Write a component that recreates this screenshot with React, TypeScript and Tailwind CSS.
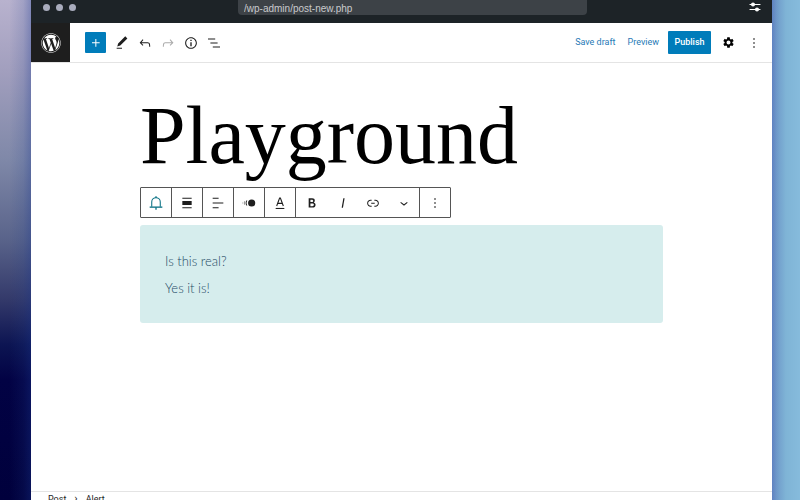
import type { ReactNode } from 'react';
import { FaWordpress } from 'react-icons/fa';
import { MdSettings } from 'react-icons/md';

const PATHS = {
  plus: 'M11 12.5V17.5H12.5V12.5H17.5V11H12.5V6H11V11H6V12.5H11Z',
  edit: 'M20.1 5.1L16.9 2 6.2 12.7l-1.3 4.4 4.5-1.3L20.1 5.1zM4 20.8h8v-1.5H4v1.5z',
  undo: 'M18.3 11.7c-.6-.6-1.4-.9-2.3-.9H6.7l2.9-3.3-1.1-1-4.5 5L8.5 16l1-1-2.7-2.7H16c.5 0 .9.2 1.3.5 1 1 1 3.4 1 4.5v.3h1.5v-.2c0-1.5 0-4.3-1.5-5.7z',
  redo: 'M15.6 6.5l-1.1 1 2.9 3.3H8c-.9 0-1.7.3-2.3.9-1.4 1.5-1.4 4.2-1.4 5.6v.2h1.5v-.3c0-1.1 0-3.5 1-4.5.3-.3.7-.5 1.3-.5h9.2L14.5 15l1.1 1.1 4.6-4.6-4.6-5z',
  info: 'M12 3.2c-4.8 0-8.8 3.9-8.8 8.8 0 4.8 3.9 8.8 8.8 8.8 4.8 0 8.8-3.9 8.8-8.8 0-4.8-4-8.8-8.8-8.8zm0 16c-4 0-7.2-3.3-7.2-7.2C4.8 8 8 4.8 12 4.8s7.2 3.3 7.2 7.2c0 4-3.2 7.2-7.2 7.2zM11 17h2v-6h-2v6zm0-8h2V7h-2v2z',
  listView: 'M13.8 5.2H3v1.5h10.8V5.2zm-3.6 12v1.5H21v-1.5H10.2zm7.2-6H6.6v1.5h10.8v-1.5z',
  more: 'M13 19h-2v-2h2v2zm0-6h-2v-2h2v2zm0-6h-2V5h2v2z',
  alignBlock: 'M5 15h14V9H5v6zm0 4.8h14v-1.5H5v1.5zM5 4.2v1.5h14V4.2H5z',
  alignText: 'M4 19.8h8.9v-1.5H4v1.5zm8.9-15.6H4v1.5h8.9V4.2zm-8.9 7v1.5h16v-1.5H4z',
  bold: 'M14.7 11.3c1-.6 1.5-1.6 1.5-3 0-2.3-1.3-3.4-4-3.4H7v14h5.8c1.4 0 2.5-.3 3.3-1 .8-.7 1.2-1.7 1.2-2.9.1-1.9-.8-3.1-2.6-3.7zm-5.1-4h2.3c.6 0 1.1.1 1.4.4.3.3.5.7.5 1.2s-.2 1-.5 1.2c-.3.3-.8.4-1.4.4H9.6V7.3zm4.6 9c-.4.3-1 .4-1.7.4H9.6v-3.9h2.9c.7 0 1.3.2 1.7.5.4.3.6.8.6 1.5s-.2 1.2-.6 1.5z',
  italic: 'M12.5 5L10 19h1.9l2.5-14z',
  link: 'M15.6 7.2H14v1.5h1.6c2 0 3.7 1.7 3.7 3.7s-1.7 3.7-3.7 3.7H14v1.5h1.6c2.8 0 5.2-2.3 5.2-5.2 0-2.9-2.3-5.2-5.2-5.2zM4.7 12.4c0-2 1.7-3.7 3.7-3.7H10V7.2H8.4c-2.9 0-5.2 2.3-5.2 5.2 0 2.9 2.3 5.2 5.2 5.2H10v-1.5H8.4c-2 0-3.7-1.7-3.7-3.7zm4.6.9h5.3v-1.5H9.3v1.5z',
  chevron: 'M17.5 11.6L12 16l-5.5-4.4.9-1.2L12 14l4.5-3.6 1 1.2z',
};

function Icon({ name }: { name: keyof typeof PATHS }) {
  return (
    <svg width="16" height="16" viewBox="0 0 24 24" fill="currentColor" aria-hidden="true">
      <path d={PATHS[name]} />
    </svg>
  );
}

function BellIcon() {
  return (
    <svg width="16" height="16" viewBox="0 0 24 24" fill="none" stroke="currentColor" strokeWidth="1.6" aria-hidden="true">
      <path d="M5.6 17.5V10.5a6.4 6.4 0 0 1 12.8 0v7" />
      <path d="M2.5 18.2h19" strokeWidth="2" />
      <path d="M12 2v2.5M12 18.5v3.8" strokeWidth="2" />
    </svg>
  );
}

function MotionIcon() {
  return (
    <svg width="16" height="16" viewBox="0 0 24 24" fill="none" stroke="currentColor" strokeWidth="1.4" aria-hidden="true">
      <circle cx="16" cy="12" r="5.4" fill="currentColor" stroke="none" />
      <path d="M8.6 8.2a8 8 0 0 0 0 7.6" />
      <path d="M5.6 9.2a8 8 0 0 0 0 5.6" opacity=".5" />
      <path d="M2.8 10.4a6 6 0 0 0 0 3.2" opacity=".25" />
    </svg>
  );
}

function TextColorIcon() {
  return (
    <svg width="16" height="16" viewBox="0 0 24 24" fill="none" stroke="currentColor" strokeWidth="1.6" aria-hidden="true">
      <path d="M7 16.5 11.4 4.5h1.2L17 16.5M8.6 12.6h6.8" />
      <path d="M5.5 20.2h13" />
    </svg>
  );
}

function SlidersIcon() {
  return (
    <svg width="12" height="12" viewBox="0 0 24 24" fill="#fff" stroke="#fff" strokeWidth="2.4" strokeLinecap="round" aria-hidden="true">
      <path d="M2 7h20M2 17h20" />
      <circle cx="8" cy="7" r="2.8" />
      <circle cx="16" cy="17" r="2.8" />
    </svg>
  );
}

interface IconButtonProps {
  label: string;
  className: string;
  children: ReactNode;
}

function IconButton({ label, className, children }: IconButtonProps) {
  return (
    <button type="button" aria-label={label} className={`flex shrink-0 items-center justify-center ${className}`}>
      {children}
    </button>
  );
}

function BrowserBar() {
  return (
    <div className="flex h-[23px] shrink-0 items-start justify-between bg-[#1d2327]">
      <div className="ml-3 flex h-[14px] w-[33px] items-center gap-[6px]">
        <span className="size-[7px] shrink-0 rounded-full bg-[#a9acbd]" />
        <span className="size-[7px] shrink-0 rounded-full bg-[#a9acbd]" />
        <span className="size-[7px] shrink-0 rounded-full bg-[#a9acbd]" />
      </div>
      <input
        type="text"
        aria-label="Address"
        defaultValue="/wp-admin/post-new.php"
        className="h-[15px] w-[349px] max-w-[50vw] rounded-b bg-[#3d4247] px-[6px] pt-px font-['Liberation_Sans',sans-serif] text-[10px] text-[#c9cacd] outline-none"
      />
      <div className="mr-[11px] flex h-[14px] items-center">
        <IconButton label="Browser settings" className="size-3">
          <SlidersIcon />
        </IconButton>
      </div>
    </div>
  );
}

function EditorHeader() {
  return (
    <header className="flex h-[40px] shrink-0 items-center border-b border-[#e4e4e4]">
      <a href="#posts" aria-label="View posts" className="flex h-[39px] w-[39px] items-center justify-center bg-[#1e1e1e] text-white">
        <FaWordpress size={20} />
      </a>
      <IconButton label="Add block" className="ml-[15px] mr-1 size-[21px] rounded-[1px] bg-[#007cba] text-white">
        <Icon name="plus" />
      </IconButton>
      <IconButton label="Tools" className="size-[23px]"><Icon name="edit" /></IconButton>
      <IconButton label="Undo" className="size-[23px]"><Icon name="undo" /></IconButton>
      <IconButton label="Redo" className="size-[23px] text-[#aaaaaa]"><Icon name="redo" /></IconButton>
      <IconButton label="Details" className="size-[23px]"><Icon name="info" /></IconButton>
      <IconButton label="List view" className="size-[23px]"><Icon name="listView" /></IconButton>
      <div className="ml-auto flex items-center pr-[6px] font-['Roboto',sans-serif] text-[9px]">
        <button type="button" className="mr-3 pt-px text-[#1f7ab6]">Save draft</button>
        <button type="button" className="mr-[9px] pt-px text-[#1f7ab6]">Preview</button>
        <button type="button" className="mr-[5px] h-[23px] w-[43px] rounded-[1px] bg-[#007cba] pt-px font-medium text-white">Publish</button>
        <IconButton label="Settings" className="size-[25px] text-black"><MdSettings size={13} /></IconButton>
        <IconButton label="Options" className="size-[25px]"><Icon name="more" /></IconButton>
      </div>
    </header>
  );
}

function BlockToolbar() {
  return (
    <div role="toolbar" aria-label="Block tools" className="flex h-[31px] w-fit divide-x divide-[#555555] rounded-[1px] border border-[#555555]">
      <IconButton label="Alert" className="w-[31px] text-[#0b7285]"><BellIcon /></IconButton>
      <IconButton label="Align" className="w-[31px]"><Icon name="alignBlock" /></IconButton>
      <IconButton label="Align text" className="w-[31px]"><Icon name="alignText" /></IconButton>
      <IconButton label="Animation" className="w-[31px]"><MotionIcon /></IconButton>
      <IconButton label="Text color" className="w-[31px]"><TextColorIcon /></IconButton>
      <div className="flex">
        <IconButton label="Bold" className="w-[31px]"><Icon name="bold" /></IconButton>
        <IconButton label="Italic" className="w-[31px]"><Icon name="italic" /></IconButton>
        <IconButton label="Link" className="w-[30px]"><Icon name="link" /></IconButton>
        <IconButton label="More" className="w-[31px]"><Icon name="chevron" /></IconButton>
      </div>
      <IconButton label="Options" className="w-[30px]"><Icon name="more" /></IconButton>
    </div>
  );
}

export default function App() {
  return (
    <div className="flex h-screen overflow-hidden font-['Inter',sans-serif] text-[#1e1e1e]">
      <div className="w-[31px] shrink-0 bg-[linear-gradient(to_right,transparent_30%,#20409026_75%,#1a389059),linear-gradient(#b8b2ce,#a29fbe_14%,#7f88a8_32%,#59638a_48%,#33396a_60%,#0c1452_69%,#020244_76%,#00003c)]" />
      <div className="flex min-w-0 flex-1 flex-col bg-white">
        <BrowserBar />
        <EditorHeader />
        <main className="min-h-0 flex-1 px-6">
          <div className="mx-auto max-w-[523px] pt-[22px]">
            <h1 className="font-['Liberation_Serif',serif] text-[82px] leading-[102px] text-black">Playground</h1>
            <BlockToolbar />
            <div className="mt-[7px] rounded-[3px] bg-[#d6eded] px-[25px] pt-[23px] pb-[21px] font-['Lato',sans-serif] text-[13px] font-light leading-[27px] text-[#1f4a66]">
              <p>Is this real?</p>
              <p>Yes it is!</p>
            </div>
          </div>
        </main>
        <nav aria-label="Breadcrumb" className="flex h-[9px] shrink-0 items-start gap-2 border-t border-[#e4e4e4] px-[17px] pt-px font-['Roboto',sans-serif] text-[9px] leading-3">
          <a href="#post">Post</a>
          <span className="text-[11px]">›</span>
          <a href="#alert">Alert</a>
        </nav>
      </div>
      <div className="w-7 shrink-0 bg-[linear-gradient(to_right,#4a6cb530,transparent_25%),linear-gradient(to_right,#6588c4,#6f9aca_15%,#7fb4d6_50%,#86bbdc)]" />
    </div>
  );
}
